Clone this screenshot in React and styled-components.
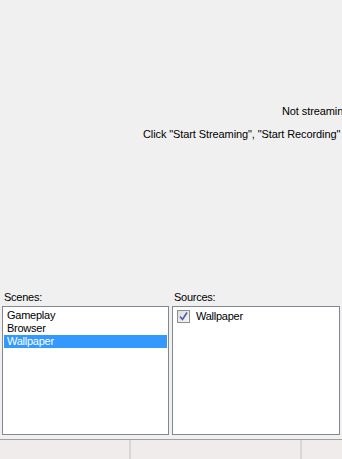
import React from 'react';
import styled, { createGlobalStyle } from 'styled-components';

const GlobalStyle = createGlobalStyle`
  html, body {
    margin: 0;
    padding: 0;
    background: #f0f0f0;
    overflow: hidden;
  }
`;

const Window = styled.div`
  display: flex;
  flex-direction: column;
  width: 342px;
  height: 459px;
  background: #f0f0f0;
  font-family: "Liberation Sans", Arial, sans-serif;
  font-size: 11px;
  letter-spacing: -0.25px;
  color: #000;
  overflow: hidden;
`;

const Preview = styled.div`
  height: 288px;
  display: flex;
  flex-direction: column;
  gap: 10px;
  padding-top: 105px;
  box-sizing: border-box;
`;

const Message = styled.div`
  white-space: nowrap;
  line-height: 13px;
  letter-spacing: -0.1px;
  padding-left: ${p => p.$indent}px;
`;

const Panels = styled.div`
  display: grid;
  grid-template-columns: 167px 168px;
  column-gap: 3px;
  padding: 0 2px 4px 2px;
`;

const Panel = styled.div`
  display: flex;
  flex-direction: column;
`;

const Label = styled.div`
  height: 18px;
  line-height: 14px;
  padding: 2px 0 0 2px;
  box-sizing: border-box;
`;

const ListBox = styled.div`
  height: 129px;
  box-sizing: border-box;
  border: 1px solid #828790;
  background: #fff;
  padding: 2px 1px;
`;

const Item = styled.div`
  height: 13px;
  line-height: 13px;
  padding-left: 3px;
  background: ${p => (p.$selected ? '#3399ff' : 'transparent')};
  color: ${p => (p.$selected ? '#fff' : '#000')};
`;

const SourceRow = styled.div`
  display: flex;
  align-items: center;
  gap: 6px;
  height: 14px;
  padding-left: 3px;
`;

const Check = styled.span`
  width: 13px;
  height: 13px;
  box-sizing: border-box;
  border: 1px solid #8f8f8f;
  background: linear-gradient(135deg, #dcdcdc, #f6f6f6);
  display: flex;
  align-items: center;
  justify-content: center;
`;

const StatusBar = styled.div`
  flex: 1;
  display: grid;
  grid-template-columns: 131px 171px 1fr;
  border-top: 1px solid #a0a0a0;
  background: #efeceb;
`;

const StatusCell = styled.div`
  border-right: 2px solid #d9d7d6;
`;

const scenes = ['Gameplay', 'Browser', 'Wallpaper'];

export default function App() {
  return (
    <>
      <GlobalStyle />
      <Window>
        <Preview>
          <Message $indent={282}>Not streaming</Message>
          <Message $indent={143}>Click "Start Streaming", "Start Recording"</Message>
        </Preview>
        <Panels>
          <Panel>
            <Label>Scenes:</Label>
            <ListBox>
              {scenes.map(s => (
                <Item key={s} $selected={s === 'Wallpaper'}>{s}</Item>
              ))}
            </ListBox>
          </Panel>
          <Panel>
            <Label>Sources:</Label>
            <ListBox>
              <SourceRow>
                <Check>
                  <svg width="9" height="9" viewBox="0 0 9 9">
                    <path d="M1 4.5 L3.5 7.5 L8 0.5" fill="none" stroke="#4a5fa8" strokeWidth="1.6" />
                  </svg>
                </Check>
                <span>Wallpaper</span>
              </SourceRow>
            </ListBox>
          </Panel>
        </Panels>
        <StatusBar>
          <StatusCell />
          <StatusCell />
          <div />
        </StatusBar>
      </Window>
    </>
  );
}
